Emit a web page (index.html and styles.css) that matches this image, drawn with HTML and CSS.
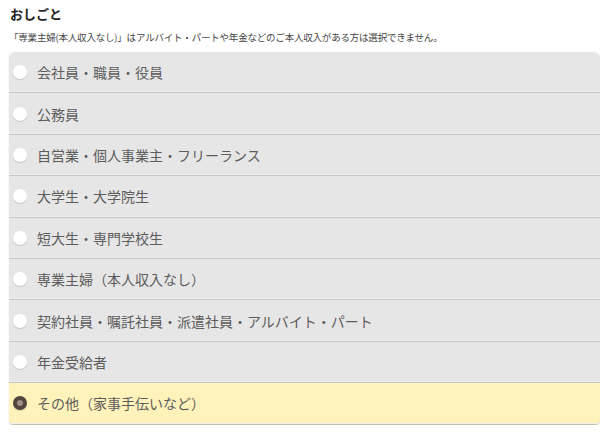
FILE: index.html
```html
<!DOCTYPE html>
<html lang="ja">
<head>
    <meta charset="UTF-8">
    <title>おしごと</title>
    <link rel="stylesheet" href="styles.css">
</head>
<body>
    <div class="section">
        <h2 class="title">おしごと</h2>
        <p class="note">「専業主婦(本人収入なし)」はアルバイト・パートや年金などのご本人収入がある方は選択できません。</p>

        <div class="choices">
            <label class="choice"><span class="radio"></span>会社員・職員・役員</label>
            <label class="choice"><span class="radio"></span>公務員</label>
            <label class="choice"><span class="radio"></span>自営業・個人事業主・フリーランス</label>
            <label class="choice"><span class="radio"></span>大学生・大学院生</label>
            <label class="choice"><span class="radio"></span>短大生・専門学校生</label>
            <label class="choice"><span class="radio"></span>専業主婦（本人収入なし）</label>
            <label class="choice"><span class="radio"></span>契約社員・嘱託社員・派遣社員・アルバイト・パート</label>
            <label class="choice"><span class="radio"></span>年金受給者</label>
            <label class="choice selected"><span class="radio"></span>その他（家事手伝いなど）</label>
        </div>
    </div>
</body>
</html>
```

FILE: styles.css
```css
* { margin: 0; padding: 0; box-sizing: border-box; }
body {
    font-family: "Noto Sans CJK JP", "Noto Sans", sans-serif;
    background: #fff;
    color: #555;
    width: 600px;
}
.section {
    padding: 5px 0 0 9px;
}
.title {
    font-size: 13px;
    font-weight: bold;
    color: #222;
    line-height: 18px;
    margin-left: 1px;
}
.note {
    font-size: 9.5px;
    color: #444;
    line-height: 14px;
    margin-top: 7px;
    letter-spacing: -0.2px;
}
.choices {
    margin-top: 8px;
    border-radius: 6px;
    overflow: hidden;
    background: #e6e6e6;
    box-shadow: 0 1px 1px rgba(0,0,0,0.25);
}
.choice {
    display: flex;
    align-items: center;
    height: 41.4px;
    padding-left: 4px;
    font-size: 14px;
    color: #5c5c5c;
    border-bottom: 1px solid #c6c6c6;
    box-shadow: inset 0 -1px 0 #ededed;
}
.choice:last-child {
    border-bottom: 1px solid #c2bca6;
}
.choice.selected {
    background: #fff2bb;
}
.radio {
    width: 14px;
    height: 14px;
    border-radius: 50%;
    background: #fff;
    box-shadow: 0 1px 1px rgba(0,0,0,0.15);
    margin-right: 10px;
    flex-shrink: 0;
}
.selected .radio {
    background: #9a918a;
    border: 4px solid #52463c;
}
```
